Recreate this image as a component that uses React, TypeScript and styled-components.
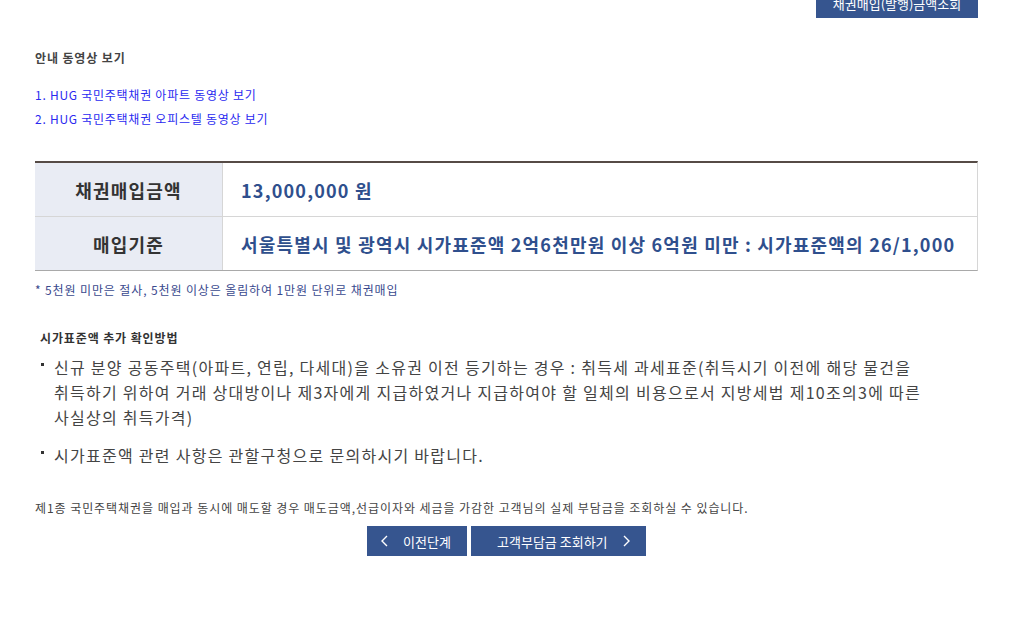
import styled, { createGlobalStyle } from "styled-components";

const GlobalStyle = createGlobalStyle`
  html, body {
    margin: 0;
    padding: 0;
    background: #fff;
  }
  body {
    font-family: "Noto Sans CJK KR", "Noto Sans", sans-serif;
    color: #333;
    letter-spacing: 0.055em;
  }
`;

const Page = styled.div`
  padding: 0 33px 40px 35px;
  overflow: hidden;
`;

const TopBar = styled.div`
  display: flex;
  justify-content: flex-end;
  margin-top: -12px;
`;

const NavyButton = styled.button`
  display: inline-flex;
  align-items: center;
  height: 30px;
  padding: 0;
  border: 0;
  background: #36558f;
  color: #fff;
  font-family: inherit;
  font-size: 13px;
  letter-spacing: 0;
  cursor: pointer;
`;

const LookupButton = styled(NavyButton)`
  width: 162px;
  justify-content: center;
`;

const SectionTitle = styled.h3`
  margin: 31px 0 0;
  font-size: 12px;
  line-height: 18px;
  font-weight: 700;
  color: #444;
`;

const VideoList = styled.ul`
  list-style: none;
  margin: 16px 0 0;
  padding: 0;
`;

const VideoLink = styled.a`
  display: block;
  font-size: 12px;
  line-height: 24px;
  letter-spacing: 0.062em;
  color: #2a2af0;
  text-decoration: none;
`;

const InfoTable = styled.div`
  margin-top: 30px;
  display: grid;
  grid-template-columns: 188px 1fr;
  border-top: 2px solid #564b46;
  border-bottom: 1px solid #a9a9a9;
  border-right: 1px solid #d6d6d6;
  letter-spacing: 0.075em;
`;

const Label = styled.div<{ $last?: boolean }>`
  height: 53px;
  display: flex;
  align-items: center;
  justify-content: center;
  background: #e9ecf4;
  border-right: 1px solid #d6d6d6;
  border-bottom: ${(p) => (p.$last ? "0" : "1px solid #d6d6d6")};
  font-size: 18px;
  font-weight: 700;
  color: #333;
`;

const Value = styled.div<{ $last?: boolean }>`
  height: 53px;
  display: flex;
  align-items: center;
  padding-left: 18px;
  border-bottom: ${(p) => (p.$last ? "0" : "1px solid #d6d6d6")};
  font-size: 18px;
  font-weight: 700;
  color: #2f4f8d;
`;

const Note = styled.p`
  margin: 10px 0 0;
  font-size: 12px;
  line-height: 18px;
  color: #3a4a8e;
`;

const SubTitle = styled.h4`
  margin: 30px 0 0 5px;
  font-size: 12px;
  line-height: 18px;
  font-weight: 700;
  color: #333;
`;

const Bullets = styled.ul`
  list-style: none;
  margin: 8px 0 0;
  padding: 0 0 0 6px;
  display: flex;
  flex-direction: column;
  gap: 13px;
`;

const Bullet = styled.li`
  display: flex;
  align-items: flex-start;
  font-size: 16px;
  line-height: 25px;
  letter-spacing: 0.08em;
  color: #444;
`;

const Marker = styled.span`
  flex: none;
  width: 3px;
  height: 3px;
  margin: 8px 10px 0 0;
  background: #333;
`;

const Footer = styled.p`
  margin: 31px 0 0;
  font-size: 12px;
  line-height: 18px;
  letter-spacing: 0.078em;
  color: #444;
`;

const ButtonRow = styled.div`
  display: flex;
  justify-content: center;
  gap: 4px;
  margin-top: 9px;
`;

const StepButton = styled(NavyButton)<{ $w: number; $pad: number }>`
  width: ${(p) => p.$w}px;
  padding-left: ${(p) => p.$pad}px;
  gap: 15px;
`;

function Chevron({ dir }: { dir: "left" | "right" }) {
  return (
    <svg width="7" height="12" viewBox="0 0 7 12" fill="none">
      <polyline
        points={dir === "left" ? "6,1 1,6 6,11" : "1,1 6,6 1,11"}
        stroke="#fff"
        strokeWidth="1.4"
      />
    </svg>
  );
}

export default function App() {
  return (
    <>
      <GlobalStyle />
      <Page>
        <TopBar>
          <LookupButton>채권매입(발행)금액조회</LookupButton>
        </TopBar>

        <SectionTitle>안내 동영상 보기</SectionTitle>
        <VideoList>
          <li>
            <VideoLink href="#">1. HUG 국민주택채권 아파트 동영상 보기</VideoLink>
          </li>
          <li>
            <VideoLink href="#">2. HUG 국민주택채권 오피스텔 동영상 보기</VideoLink>
          </li>
        </VideoList>

        <InfoTable>
          <Label>채권매입금액</Label>
          <Value>13,000,000 원</Value>
          <Label $last>매입기준</Label>
          <Value $last>
            서울특별시 및 광역시 시가표준액 2억6천만원 이상 6억원 미만 : 시가표준액의 26/1,000
          </Value>
        </InfoTable>

        <Note>* 5천원 미만은 절사, 5천원 이상은 올림하여 1만원 단위로 채권매입</Note>

        <SubTitle>시가표준액 추가 확인방법</SubTitle>
        <Bullets>
          <Bullet>
            <Marker />
            <span>
              신규 분양 공동주택(아파트, 연립, 다세대)을 소유권 이전 등기하는 경우 : 취득세 과세표준(취득시기 이전에 해당 물건을
              <br />
              취득하기 위하여 거래 상대방이나 제3자에게 지급하였거나 지급하여야 할 일체의 비용으로서 지방세법 제10조의3에 따른
              <br />
              사실상의 취득가격)
            </span>
          </Bullet>
          <Bullet>
            <Marker />
            <span>시가표준액 관련 사항은 관할구청으로 문의하시기 바랍니다.</span>
          </Bullet>
        </Bullets>

        <Footer>
          제1종 국민주택채권을 매입과 동시에 매도할 경우 매도금액,선급이자와 세금을 가감한 고객님의 실제 부담금을 조회하실 수 있습니다.
        </Footer>

        <ButtonRow>
          <StepButton $w={100} $pad={14}>
            <Chevron dir="left" />
            이전단계
          </StepButton>
          <StepButton $w={175} $pad={26}>
            고객부담금 조회하기
            <Chevron dir="right" />
          </StepButton>
        </ButtonRow>
      </Page>
    </>
  );
}
